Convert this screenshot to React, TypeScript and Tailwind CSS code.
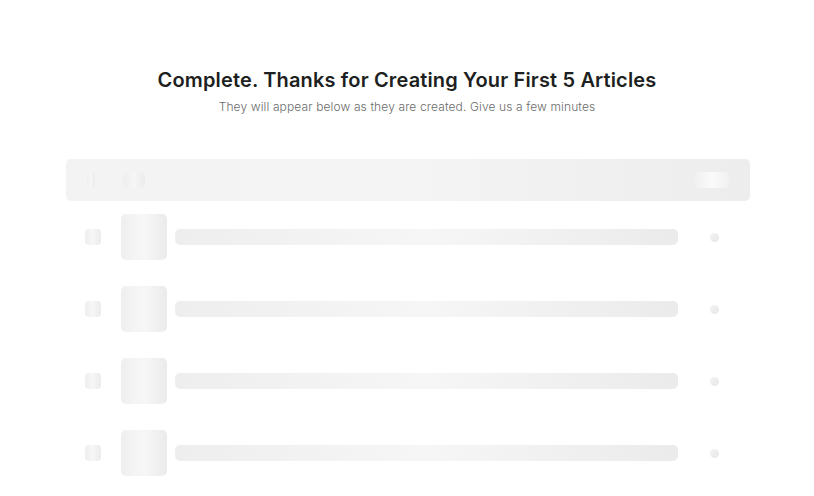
const ROWS = [0, 1, 2, 3];

function Shimmer({ className }: { className: string }) {
  return (
    <div
      className={`bg-gradient-to-r from-[#efeeee] via-[#f6f6f6] to-[#ecebeb] ${className}`}
    />
  );
}

function ArticleRow() {
  return (
    <div className="flex h-[72px] items-center">
      <div className="w-[19px] shrink-0" />
      <Shimmer className="h-4 w-4 shrink-0 rounded-[4px]" />
      <div className="w-5 shrink-0" />
      <div className="h-[46px] w-[46px] shrink-0 rounded-[5px] bg-gradient-to-r from-[#efefef] via-[#f7f7f7] to-[#ebebeb]" />
      <div className="w-2 shrink-0" />
      <Shimmer className="h-4 flex-1 rounded-[5px]" />
      <div className="w-8 shrink-0" />
      <div className="h-[9px] w-[9px] shrink-0 rounded-full bg-gradient-to-br from-[#f4f4f4] to-[#e6e6e6]" />
      <div className="w-[31px] shrink-0" />
    </div>
  );
}

export default function App() {
  return (
    <div
      className="min-h-[496px] w-full bg-white"
      style={{ fontFamily: "Inter, 'Noto Sans', sans-serif" }}
    >
      <div className="flex flex-col items-center pt-[66px]">
        <h1 className="text-[20px] font-semibold leading-[28px] tracking-[0.15px] text-[#1d1f21]">
          Complete. Thanks for Creating Your First 5 Articles
        </h1>
        <p className="mt-[5px] text-[12px] font-light leading-[16px] tracking-[0.12px] text-[#6b6b6b]">
          They will appear below as they are created. Give us a few minutes
        </p>
      </div>

      <div className="ml-[66px] mt-[44px] w-[684px]">
        <div className="flex h-[42px] items-center rounded-[5px] bg-gradient-to-r from-[#f3f3f3] via-[#f5f4f4] to-[#eeeded] px-[21px]">
          <Shimmer className="h-4 w-2 rounded-[4px]" />
          <div className="w-7" />
          <Shimmer className="h-4 w-[22px] rounded-[5px]" />
          <div className="flex-1" />
          <div className="h-4 w-[35px] rounded-[5px] bg-gradient-to-r from-[#f0f0f0] via-[#fafafa] to-[#f1f1f1]" />
        </div>

        <div className="flex flex-col">
          {ROWS.map((r) => (
            <ArticleRow key={r} />
          ))}
        </div>
      </div>
    </div>
  );
}
